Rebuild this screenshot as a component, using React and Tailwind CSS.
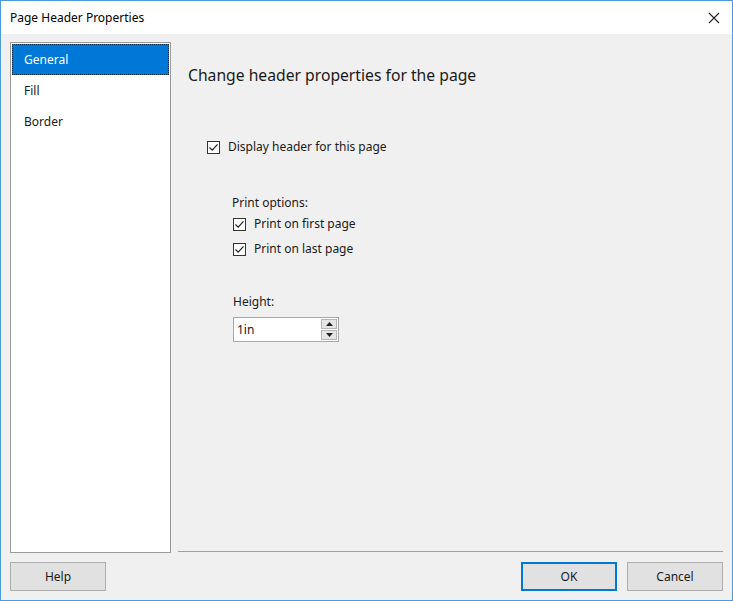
import { useState } from 'react'

const font = { fontFamily: '"Noto Sans", "Segoe UI", Arial, sans-serif' }

function CheckBox({ checked, label, onToggle }) {
  return (
    <label className="flex items-center gap-[8px] h-[14px] cursor-default select-none" onClick={onToggle}>
      <span className="w-[13px] h-[13px] border border-[#333333] bg-white flex items-center justify-center">
        {checked && (
          <svg width="11" height="11" viewBox="0 0 11 11">
            <path d="M1.5 5.5 L4.2 8.2 L9.5 2.4" fill="none" stroke="#222222" strokeWidth="1.2" />
          </svg>
        )}
      </span>
      <span className="text-[12px] text-[#1a1a1a] leading-[14px]">{label}</span>
    </label>
  )
}

function DlgButton({ children, focused }) {
  return (
    <button
      className={`w-[96px] h-[29px] bg-[#e1e1e1] text-[12px] text-[#1a1a1a] ${
        focused ? 'border-2 border-[#0078d7]' : 'border border-[#adadad]'
      }`}
    >
      {children}
    </button>
  )
}

export default function App() {
  const [page, setPage] = useState('General')
  const [showHeader, setShowHeader] = useState(true)
  const [firstPage, setFirstPage] = useState(true)
  const [lastPage, setLastPage] = useState(true)

  const pages = ['General', 'Fill', 'Border']

  return (
    <div style={font} className="w-[733px] h-[601px] flex flex-col border border-[#4a9be0] bg-[#f0f0f0]">
      {/* title bar */}
      <div className="h-[33px] bg-white flex items-center justify-between pl-[9px] pr-[12px]">
        <span className="text-[12px] text-black">Page Header Properties</span>
        <svg width="12" height="12" viewBox="0 0 12 12">
          <path d="M1 1 L11 11 M11 1 L1 11" stroke="#222222" strokeWidth="1.1" />
        </svg>
      </div>

      <div className="flex-1 flex flex-col px-[9px]">
        <div className="flex mt-[8px]">
          {/* page list */}
          <div className="w-[161px] h-[511px] border border-[#9a9a9a] bg-white p-[1px]">
            {pages.map((p) => (
              <div
                key={p}
                onClick={() => setPage(p)}
                className={`h-[31px] flex items-center pl-[12px] text-[12px] ${
                  page === p
                    ? 'bg-[#0078d7] text-white outline-1 outline-dotted outline-[#0b2f55] -outline-offset-1'
                    : 'text-[#1a1a1a]'
                }`}
              >
                {p}
              </div>
            ))}
          </div>

          {/* content panel */}
          <div className="flex-1 flex flex-col ml-[7px]">
            <div className="flex-1 flex flex-col pl-[10px]">
              <div className="mt-[22px] text-[15.7px] text-[#1a1a1a] leading-[22px]">
                Change header properties for the page
              </div>
              <div className="mt-[54px] ml-[19px]">
                <CheckBox checked={showHeader} label="Display header for this page" onToggle={() => setShowHeader(!showHeader)} />
              </div>
              <div className="mt-[42px] ml-[44px] flex flex-col">
                <span className="text-[12px] text-[#1a1a1a] leading-[14px]">Print options:</span>
                <div className="mt-[7px] flex flex-col gap-[11px] ml-[1px]">
                  <CheckBox checked={firstPage} label="Print on first page" onToggle={() => setFirstPage(!firstPage)} />
                  <CheckBox checked={lastPage} label="Print on last page" onToggle={() => setLastPage(!lastPage)} />
                </div>
                <span className="mt-[39px] ml-[1px] text-[12px] text-[#1a1a1a] leading-[14px]">Height:</span>
                <div className="mt-[8px] ml-[1px] w-[106px] h-[25px] border border-[#a8a8a8] bg-white flex items-center justify-between pl-[3px] pr-[1px]">
                  <span className="text-[12px] text-[#1a1a1a]">1in</span>
                  <div className="flex flex-col gap-[1px]">
                    <div className="w-[16px] h-[10px] bg-[#e5e5e5] border border-[#b5b5b5] flex items-center justify-center">
                      <svg width="7" height="4" viewBox="0 0 7 4"><path d="M0 4 L3.5 0 L7 4 Z" fill="#222" /></svg>
                    </div>
                    <div className="w-[16px] h-[10px] bg-[#e5e5e5] border border-[#b5b5b5] flex items-center justify-center">
                      <svg width="7" height="4" viewBox="0 0 7 4"><path d="M0 0 L7 0 L3.5 4 Z" fill="#222" /></svg>
                    </div>
                  </div>
                </div>
              </div>
            </div>
            <div className="h-[1px] bg-[#a0a0a0] mb-[1px]" />
          </div>
        </div>

        {/* footer buttons */}
        <div className="flex justify-between mt-[9px]">
          <DlgButton>Help</DlgButton>
          <div className="flex gap-[10px]">
            <DlgButton focused>OK</DlgButton>
            <DlgButton>Cancel</DlgButton>
          </div>
        </div>
      </div>
    </div>
  )
}
